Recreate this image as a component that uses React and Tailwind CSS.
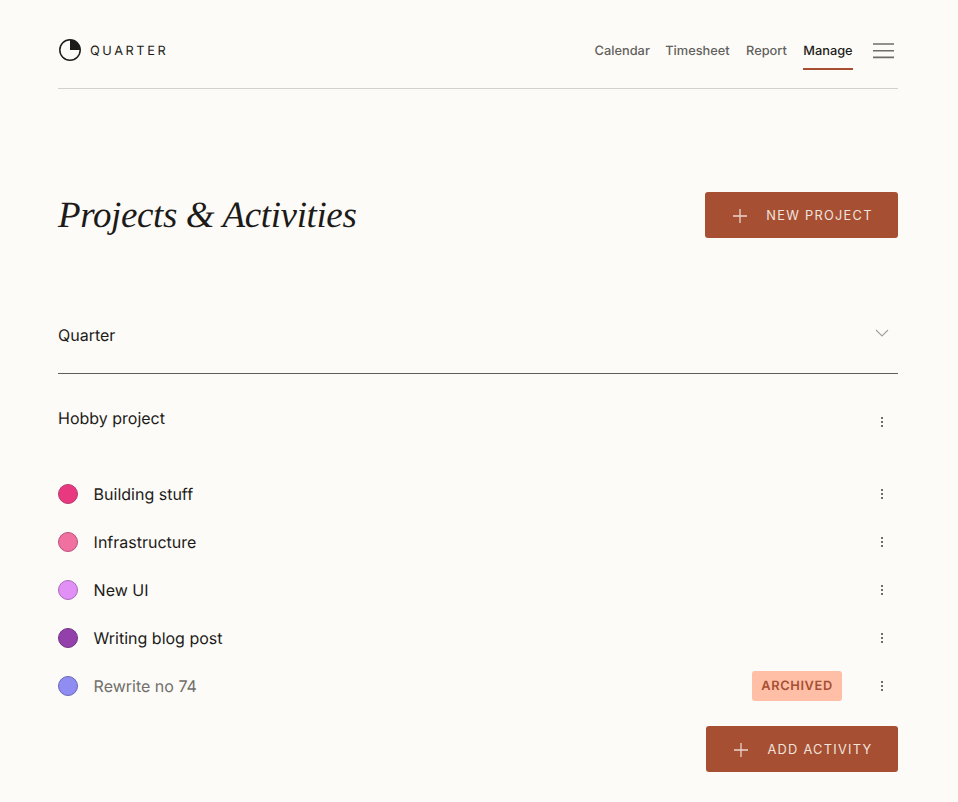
const Plus = () => (
  <svg width="16" height="16" viewBox="0 0 16 16" fill="none" stroke="#e9d5cd" strokeWidth="1.3" className="shrink-0">
    <path d="M8 1v14M1 8h14" />
  </svg>
);

const Dots = () => (
  <span className="flex w-[4px] flex-col items-center gap-[2px]">
    <span className="h-[2px] w-[2px] bg-[#6f6d69]" />
    <span className="h-[2px] w-[2px] bg-[#6f6d69]" />
    <span className="h-[2px] w-[2px] bg-[#6f6d69]" />
  </span>
);

const rows = [
  { name: "Building stuff", fill: "bg-[#e8387f]", border: "border-[#b93a70]" },
  { name: "Infrastructure", fill: "bg-[#f0709f]", border: "border-[#b9507c]" },
  { name: "New UI", fill: "bg-[#e190f5]", border: "border-[#a86bb8]" },
  { name: "Writing blog post", fill: "bg-[#9440ab]", border: "border-[#713583]" },
  { name: "Rewrite no 74", fill: "bg-[#8f8cf2]", border: "border-[#6a68b8]", archived: true },
];

const ActionButton = ({ label, width }) => (
  <button className={`flex h-[46px] items-center justify-center gap-[18px] rounded-[3px] bg-[#a64f33] pl-[2px] pt-[1px] text-[12.8px] font-normal tracking-[0.1em] text-[#f0e3dd] ${width}`}>
    <Plus />
    <span>{label}</span>
  </button>
);

export default function App() {
  return (
    <div className="min-h-[802px] bg-[#fcfbf7] pl-[58px] pr-[60px] font-['Inter',sans-serif] text-[#1c1b1a] [text-rendering:geometricPrecision]">
      <header className="flex h-[89px] items-center justify-between border-b border-[#d2d1cc]">
        <div className="flex items-center gap-[8px] pt-[12px]">
          <svg width="24" height="24" viewBox="0 0 24 24" fill="none">
            <circle cx="12" cy="12" r="10.2" stroke="#1c1b1a" strokeWidth="1.5" />
            <path d="M12 1.8A10.2 10.2 0 0 1 22.2 12H12Z" fill="#1c1b1a" />
          </svg>
          <span className="pt-[3px] text-[12.8px] tracking-[0.2em]">QUARTER</span>
        </div>
        <nav className="flex h-full items-center gap-[16.4px] text-[12.8px] font-medium text-[#63615d]">
          <a className="-mr-[1px] pt-[16px]">Calendar</a>
          <a className="pt-[16px]">Timesheet</a>
          <a className="pt-[16px]">Report</a>
          <a className="border-b-2 border-[#a64f33] pb-[6.4px] pt-[24.4px] text-[#1c1b1a]">Manage</a>
          <svg width="21" height="16" viewBox="0 0 21 16" fill="none" stroke="#6f6d69" strokeWidth="1.6" className="ml-[4px] mr-[4px] mt-[14px]">
            <path d="M0 1h21M0 7.7h21M0 14.4h21" />
          </svg>
        </nav>
      </header>

      <div className="mt-[103px] flex h-[46px] items-center justify-between">
        <h1 className="font-['Liberation_Serif',serif] text-[37px] italic leading-none tracking-[-0.01em]">Projects &amp; Activities</h1>
        <ActionButton label="NEW PROJECT" width="w-[193px]" />
      </div>

      <div className="mt-[67px] flex h-[69px] justify-between border-b border-[#5f5d59] pt-[18px] text-[16px]">
        <span>Quarter</span>
        <svg width="14" height="8" viewBox="0 0 14 8" fill="none" stroke="#a3a19c" strokeWidth="1.1" className="mr-[9px] mt-[6px]">
          <path d="M1 1l6 6 6-6" />
        </svg>
      </div>

      <div className="mt-[32px] flex h-[24px] items-start justify-between text-[16px]">
        <span>Hobby project</span>
        <span className="mr-[14px] mt-[11px]"><Dots /></span>
      </div>

      <ul className="mt-[40px] flex flex-col">
        {rows.map((r) => (
          <li key={r.name} className="flex h-[48px] items-center">
            <span className={`h-[20px] w-[20px] rounded-full border ${r.fill} ${r.border}`} />
            <span className={`ml-[15.6px] text-[16px] ${r.archived ? "text-[#716f6b]" : ""}`}>{r.name}</span>
            <span className="ml-auto flex items-center">
              {r.archived && (
                <span className="mr-[38px] flex h-[30px] w-[90px] items-center justify-center rounded-[3px] bg-[#ffbfa6] pt-[2px] text-[12.8px] font-semibold tracking-[0.05em] text-[#a64f33]">ARCHIVED</span>
              )}
              <span className="mr-[14px]"><Dots /></span>
            </span>
          </li>
        ))}
      </ul>

      <div className="mt-[16px] flex justify-end pb-[30px]">
        <ActionButton label="ADD ACTIVITY" width="w-[192px]" />
      </div>
    </div>
  );
}
